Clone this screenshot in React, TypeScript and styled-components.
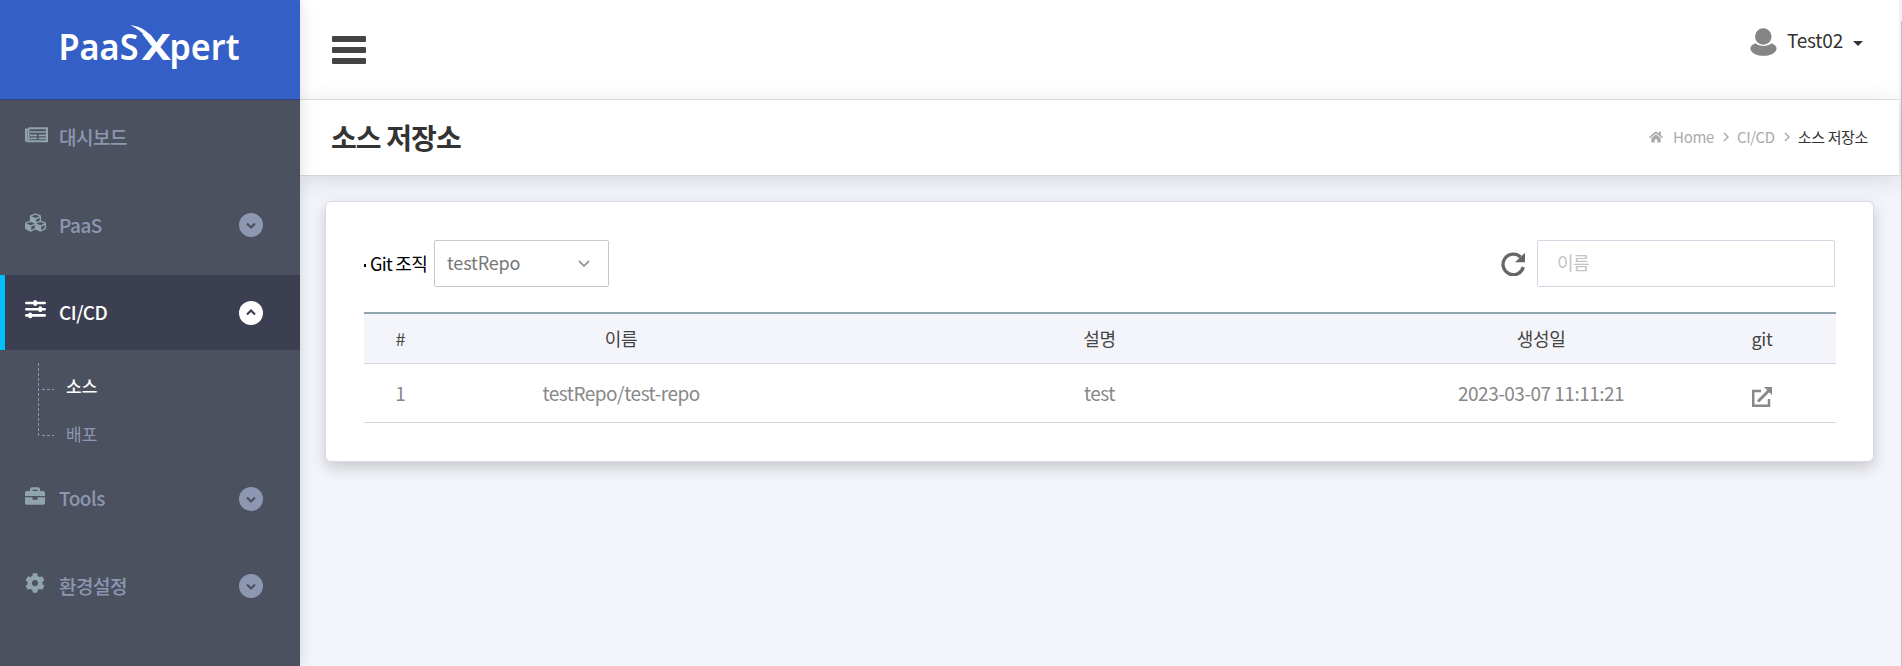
import React from 'react';
import styled, { createGlobalStyle } from 'styled-components';
import { FaCubes, FaBriefcase, FaCog, FaHome } from 'react-icons/fa';

const GlobalStyle = createGlobalStyle`
  *, *::before, *::after { box-sizing: border-box; }
  body {
    margin: 0;
    background: #f4f5fa;
    color: #333;
    font-family: 'Noto Sans CJK KR', 'Noto Sans', sans-serif;
    font-size: 19px;
    letter-spacing: -0.5px;
    overflow: hidden;
  }
  ul, ol { list-style: none; margin: 0; padding: 0; }
  a { color: inherit; text-decoration: none; }
  svg { display: block; }
`;

const Shell = styled.div`
  display: flex;
  height: 100vh;
`;

const Sidebar = styled.aside`
  position: relative;
  z-index: 2;
  flex: 0 0 300px;
  background: #4c515f;
  box-shadow: 0 0 15px rgba(0, 0, 0, 0.14);
`;

const Brand = styled.a`
  display: flex;
  height: 100px;
  background: #335fc6;
  border-bottom: 1px solid #2b4584;
`;

const Menu = styled.ul`
  display: flex;
  flex-direction: column;
  gap: 12.5px;
`;

const MenuLink = styled.a<{ $active?: boolean }>`
  display: flex;
  align-items: center;
  height: 75px;
  padding: 0 37px 0 ${p => (p.$active ? 20 : 25)}px;
  border-left: ${p => (p.$active ? '5px solid #00bfff' : '0')};
  background: ${p => (p.$active ? '#3c3f51' : 'transparent')};
  color: ${p => (p.$active ? '#fff' : '#8e97b2')};
  font-weight: 500;
`;

const MenuIcon = styled.span<{ $active?: boolean }>`
  display: flex;
  width: 34px;
  padding-bottom: 6px;
  color: ${p => (p.$active ? '#fff' : '#90a4ae')};
`;

const MenuText = styled.span`
  flex: 1;
  padding-bottom: 2px;
`;

const SubMenu = styled.ul`
  display: flex;
  height: 98.5px;
  padding: 12px 0 0 38px;
`;

const SubItems = styled.div`
  padding-left: 12px;
`;

const SubItem = styled.li<{ $active?: boolean }>`
  height: 48px;
  line-height: 47px;
  font-size: 17px;
  letter-spacing: 0;
  font-weight: ${p => (p.$active ? 500 : 400)};
  color: ${p => (p.$active ? '#fff' : '#8e97b2')};
`;

const Main = styled.div`
  flex: 1;
  min-width: 0;
`;

const TopBar = styled.header`
  display: flex;
  justify-content: space-between;
  height: 100px;
  padding: 0 36px 0 32px;
  background: #fff;
  border-bottom: 1px solid #e4e5e7;
`;

const MenuToggle = styled.div`
  display: flex;
  flex-direction: column;
  gap: 5px;
  padding-top: 36px;
`;

const ToggleBar = styled.span`
  width: 34px;
  height: 6px;
  border-radius: 1px;
  background: #444;
`;

const Account = styled.div`
  display: flex;
  align-items: center;
  height: 84px;
`;

const UserName = styled.span`
  padding: 0 10px 6px 10px;
  letter-spacing: -0.2px;
`;

const Caret = styled.i`
  margin-top: 3px;
  border: 5px solid transparent;
  border-top-color: #333;
  border-bottom: 0;
`;

const TitleBar = styled.div`
  position: relative;
  display: flex;
  align-items: center;
  justify-content: space-between;
  height: 76px;
  padding: 0 31px 2px 31px;
  background: #fff;
  border-bottom: 1px solid #d3d6df;
  box-shadow: 0 4px 25px rgba(0, 0, 0, 0.12);
`;

const Title = styled.h1`
  margin: 0;
  font-size: 28px;
  font-weight: 700;
  letter-spacing: -0.9px;
`;

const Crumbs = styled.ol`
  display: flex;
  align-items: center;
  color: #aaa;
`;

const HomeMark = styled.li`
  padding: 1px 10px 0 0;
`;

const Crumb = styled.li<{ $current?: boolean }>`
  color: ${p => (p.$current ? '#333' : '#aaa')};
  font-size: 15px;
  letter-spacing: -0.35px;
`;

const Card = styled.section`
  position: relative;
  margin: 25px 25px 0 25px;
  height: 261px;
  padding: 38px 37px 0 38px;
  background: #fff;
  border: 1px solid #d7dae2;
  border-radius: 6px;
  box-shadow: 0 6px 15px rgba(0, 0, 0, 0.18);
`;

const Filters = styled.div`
  display: flex;
  align-items: center;
  height: 47px;
  padding-right: 1px;
`;

const Bullet = styled.i`
  width: 2px;
  height: 3px;
  margin: 4px 4px 0 0;
  background: #000;
`;

const OrgLabel = styled.label`
  width: 64px;
  padding-bottom: 2px;
  color: #000;
  font-size: 18px;
  letter-spacing: -0.7px;
  white-space: nowrap;
`;

const Select = styled.div`
  display: flex;
  align-items: center;
  justify-content: space-between;
  width: 175px;
  height: 47px;
  padding: 0 18px 0 12px;
  border: 1px solid #c8c8c8;
  border-radius: 2px;
  color: #777;
`;

const SelectValue = styled.span`
  padding-bottom: 3px;
  font-size: 18px;
  letter-spacing: -0.15px;
`;

const Refresh = styled.div`
  margin-left: auto;
  padding-right: 12px;
`;

const Search = styled.input`
  width: 298px;
  height: 47px;
  padding: 0 19px 3px;
  border: 1px solid #d0d8e1;
  border-radius: 2px;
  font: inherit;
  font-size: 18px;
  letter-spacing: -0.5px;
  outline: 0;
  &::placeholder { color: #c4c4c4; }
`;

const Table = styled.table`
  width: 100%;
  margin-top: 25px;
  table-layout: fixed;
  border-collapse: separate;
  border-spacing: 0;
  border-top: 2px solid #90a4ae;
  text-align: center;
`;

const HeadCell = styled.th<{ $width: string }>`
  width: ${p => p.$width};
  height: 50px;
  padding: 0 1px 1px 0;
  background: #f4f5fa;
  border-bottom: 1px solid #d6d8dc;
  color: #444;
  font-size: 18px;
  font-weight: 400;
  letter-spacing: -0.3px;
`;

const Cell = styled.td`
  height: 59px;
  padding: 0 1px 2px 0;
  border-bottom: 1px solid #d3d5d7;
  color: #888;
`;

const CellIcon = styled.span`
  display: flex;
  justify-content: center;
  padding-top: 9px;
`;

const ScrollTrack = styled.div`
  flex: 0 0 3px;
  padding: 21px 0 0 2px;
  background: #f1f1f3;
`;

const ScrollThumb = styled.div`
  height: 100%;
  background: #c1c1c1;
`;

const Logo = () => (
  <svg width="300" height="99" viewBox="0 0 300 99" fill="#fff" fontFamily="'Noto Sans', sans-serif" letterSpacing="0">
    <text x="58.5" y="59.5" fontSize="35.5" fontWeight="600" textLength="80" lengthAdjust="spacingAndGlyphs">PaaS</text>
    <text x="141.5" y="59.5" fontSize="35.5" fontWeight="700" textLength="29.5" lengthAdjust="spacingAndGlyphs">X</text>
    <text x="169.5" y="59.5" fontSize="35.5" fontWeight="600" textLength="70" lengthAdjust="spacingAndGlyphs">pert</text>
    <path d="M130 25.300C141 26 150 32 158 45L151 45C147 37 141 30 130 25.300Z" />
  </svg>
);

const Toggle = ({ open }: { open?: boolean }) => (
  <svg width="24" height="24" viewBox="0 0 24 24" fill="none">
    <circle cx="12" cy="12" r="12" fill={open ? '#fff' : '#8e97b2'} />
    <path d={open ? 'M8 13.5l4-4 4 4' : 'M8 10.5l4 4 4-4'} stroke={open ? '#3c3f51' : '#4c515f'} strokeWidth="2.2" />
  </svg>
);

const NewsIcon = () => (
  <svg width="23" height="16" viewBox="0 0 23 16" fill="none" stroke="currentColor">
    <path d="M3.500 1.200H22V14.200H2.200C1.200 14.200 1 13.500 1 12.500V2.500H3.500V13" strokeWidth="2.100" />
    <path d="M5 5H21M5 8.400H12M13.500 8.400H21M5 11.400H12M13.500 11.400H21" strokeWidth="1.700" />
  </svg>
);

const SlidersIcon = () => (
  <svg width="21" height="20" viewBox="0 0 21 20" fill="none" stroke="currentColor" strokeLinecap="round">
    <path d="M1.300 3H19.700M1.300 9.200H19.700M1.300 15.400H19.700" strokeWidth="2.600" />
    <path d="M10.200 2V4M15.300 8.200V10.200M5.200 14.400V16.400" strokeWidth="3.800" />
  </svg>
);

const Branches = () => (
  <svg width="16" height="76" viewBox="0 0 16 76" fill="none" stroke="#8e97b2" strokeDasharray="3 2">
    <path d="M.5 1v74M4 27.500h12M4 73.500h12" />
  </svg>
);

const Avatar = () => (
  <svg width="27" height="28" viewBox="0 0 27 28" fill="#858585">
    <circle cx="13.300" cy="8.500" r="8.300" />
    <path d="M5.500 15.300C2 16.500 0 19 .5 21.500 2 25.500 7 27.800 13.500 27.800S25 25.500 26.500 21.500C27 19 25 16.500 21.500 15.300 17 19 10 19 5.500 15.300Z" />
  </svg>
);

const ReloadIcon = () => (
  <svg width="24" height="24" viewBox="0 0 24 24" fill="none">
    <path d="M22.300 15A10.300 10.300 0 1 1 19.500 5" stroke="#666" strokeWidth="3.300" />
    <path d="M24 .8V10.300H14z" fill="#666" />
  </svg>
);

const OpenIcon = () => (
  <svg width="20" height="20" viewBox="0 0 20 20" fill="none" stroke="#888" strokeWidth="2.500">
    <path d="M9 4H1.200v14.800H17V12" />
    <path d="M6 14.500L17 3.500" strokeWidth="3" />
    <path d="M12 0h8v8z" fill="#888" stroke="none" />
  </svg>
);

const Chevron = () => (
  <svg width="12" height="8" viewBox="0 0 12 8" fill="none" stroke="#999" strokeWidth="1.800">
    <path d="M1 1l5 5 5-5" />
  </svg>
);

const SeparatorItem = styled.li`
  padding: 1px 8px 0 9px;
`;

const Separator = () => (
  <SeparatorItem>
    <svg width="6" height="10" viewBox="0 0 6 10" fill="none" stroke="#aaa" strokeWidth="1.500">
      <path d="M1 1l4 4-4 4" />
    </svg>
  </SeparatorItem>
);

const columns = [
  { label: '#', width: '5%' },
  { label: '이름', width: '25%' },
  { label: '설명', width: '40%' },
  { label: '생성일', width: '20%' },
  { label: 'git', width: '10%' },
];

const repos = [{ id: 1, name: 'testRepo/test-repo', description: 'test', created: '2023-03-07 11:11:21' }];

interface MenuEntry {
  label: string;
  icon: React.ReactNode;
  leaf?: boolean;
}

const upperMenu: MenuEntry[] = [
  { label: '대시보드', icon: <NewsIcon />, leaf: true },
  { label: 'PaaS', icon: <FaCubes size={21} /> },
];

const lowerMenu: MenuEntry[] = [
  { label: 'Tools', icon: <FaBriefcase size={20} /> },
  { label: '환경설정', icon: <FaCog size={20} /> },
];

const MenuItem = ({ label, icon, leaf }: MenuEntry) => (
  <li>
    <MenuLink>
      <MenuIcon>{icon}</MenuIcon>
      <MenuText>{label}</MenuText>
      {!leaf && <Toggle />}
    </MenuLink>
  </li>
);

export default function App() {
  return (
    <Shell>
      <GlobalStyle />
      <Sidebar>
        <Brand><Logo /></Brand>
        <Menu>
          {upperMenu.map(entry => <MenuItem key={entry.label} {...entry} />)}
          <li>
            <MenuLink $active>
              <MenuIcon $active><SlidersIcon /></MenuIcon>
              <MenuText>CI/CD</MenuText>
              <Toggle open />
            </MenuLink>
            <SubMenu>
              <Branches />
              <SubItems>
                <SubItem $active>소스</SubItem>
                <SubItem>배포</SubItem>
              </SubItems>
            </SubMenu>
          </li>
          {lowerMenu.map(entry => <MenuItem key={entry.label} {...entry} />)}
        </Menu>
      </Sidebar>
      <Main>
        <TopBar>
          <MenuToggle><ToggleBar /><ToggleBar /><ToggleBar /></MenuToggle>
          <Account>
            <Avatar />
            <UserName>Test02</UserName>
            <Caret />
          </Account>
        </TopBar>
        <TitleBar>
          <Title>소스 저장소</Title>
          <Crumbs>
            <HomeMark><FaHome size={14} /></HomeMark>
            <Crumb>Home</Crumb>
            <Separator />
            <Crumb>CI/CD</Crumb>
            <Separator />
            <Crumb $current>소스 저장소</Crumb>
          </Crumbs>
        </TitleBar>
        <Card>
          <Filters>
            <Bullet />
            <OrgLabel>Git 조직</OrgLabel>
            <Select><SelectValue>testRepo</SelectValue><Chevron /></Select>
            <Refresh><ReloadIcon /></Refresh>
            <Search placeholder="이름" />
          </Filters>
          <Table>
            <thead>
              <tr>{columns.map(c => <HeadCell key={c.label} $width={c.width}>{c.label}</HeadCell>)}</tr>
            </thead>
            <tbody>
              {repos.map(r => (
                <tr key={r.id}>
                  <Cell>{r.id}</Cell>
                  <Cell>{r.name}</Cell>
                  <Cell>{r.description}</Cell>
                  <Cell>{r.created}</Cell>
                  <Cell><CellIcon><OpenIcon /></CellIcon></Cell>
                </tr>
              ))}
            </tbody>
          </Table>
        </Card>
      </Main>
      <ScrollTrack><ScrollThumb /></ScrollTrack>
    </Shell>
  );
}
